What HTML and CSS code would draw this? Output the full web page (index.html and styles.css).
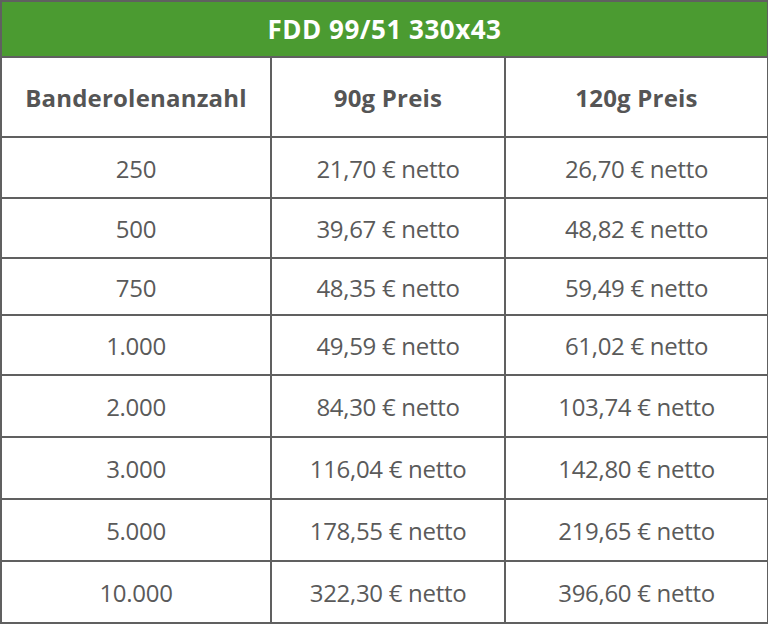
FILE: index.html
```html
<!DOCTYPE html>
<html lang="de">
<head>
<meta charset="utf-8">
<title>FDD 99/51 330x43</title>
<link rel="stylesheet" href="styles.css">
</head>
<body>
<table class="price-table">
  <colgroup>
    <col class="c1"><col class="c2"><col class="c3">
  </colgroup>
  <thead>
    <tr class="title-row"><th colspan="3">FDD 99/51 330x43</th></tr>
    <tr class="head-row"><th>Banderolenanzahl</th><th>90g Preis</th><th>120g Preis</th></tr>
  </thead>
  <tbody>
    <tr class="r61"><td>250</td><td>21,70 € netto</td><td>26,70 € netto</td></tr>
    <tr class="r60"><td>500</td><td>39,67 € netto</td><td>48,82 € netto</td></tr>
    <tr class="r57"><td>750</td><td>48,35 € netto</td><td>59,49 € netto</td></tr>
    <tr class="r60"><td>1.000</td><td>49,59 € netto</td><td>61,02 € netto</td></tr>
    <tr class="r62"><td>2.000</td><td>84,30 € netto</td><td>103,74 € netto</td></tr>
    <tr class="r62"><td>3.000</td><td>116,04 € netto</td><td>142,80 € netto</td></tr>
    <tr class="r62"><td>5.000</td><td>178,55 € netto</td><td>219,65 € netto</td></tr>
    <tr class="r62"><td>10.000</td><td>322,30 € netto</td><td>396,60 € netto</td></tr>
  </tbody>
</table>
</body>
</html>
```
FILE: styles.css
```css
html, body {
  margin: 0;
  padding: 0;
  background: #ffffff;
}
.price-table {
  width: 767px;
  border-collapse: collapse;
  table-layout: fixed;
  font-family: "Open Sans", "Liberation Sans", sans-serif;
  color: #555555;
}
.c1 { width: 270px; }
.c2 { width: 234px; }
.c3 { width: 263px; }
.price-table th,
.price-table td {
  border: 2px solid #606060;
  text-align: center;
  padding: 2px 0 0;
  line-height: 1.2;
}
.title-row th {
  background: #4b9b31;
  color: #ffffff;
  height: 52px;
  font-size: 26px;
  font-weight: 700;
  letter-spacing: 0.5px;
}
.head-row th {
  height: 76px;
  font-size: 24px;
  font-weight: 700;
  letter-spacing: 0.2px;
}
.price-table td {
  font-size: 24px;
  font-weight: 400;
  letter-spacing: -0.3px;
  color: #5a5a5a;
  padding-top: 3px;
}
.r57 td { height: 52px; }
.r60 td { height: 55px; }
.r61 td { height: 56px; }
.r62 td { height: 57px; }
```
